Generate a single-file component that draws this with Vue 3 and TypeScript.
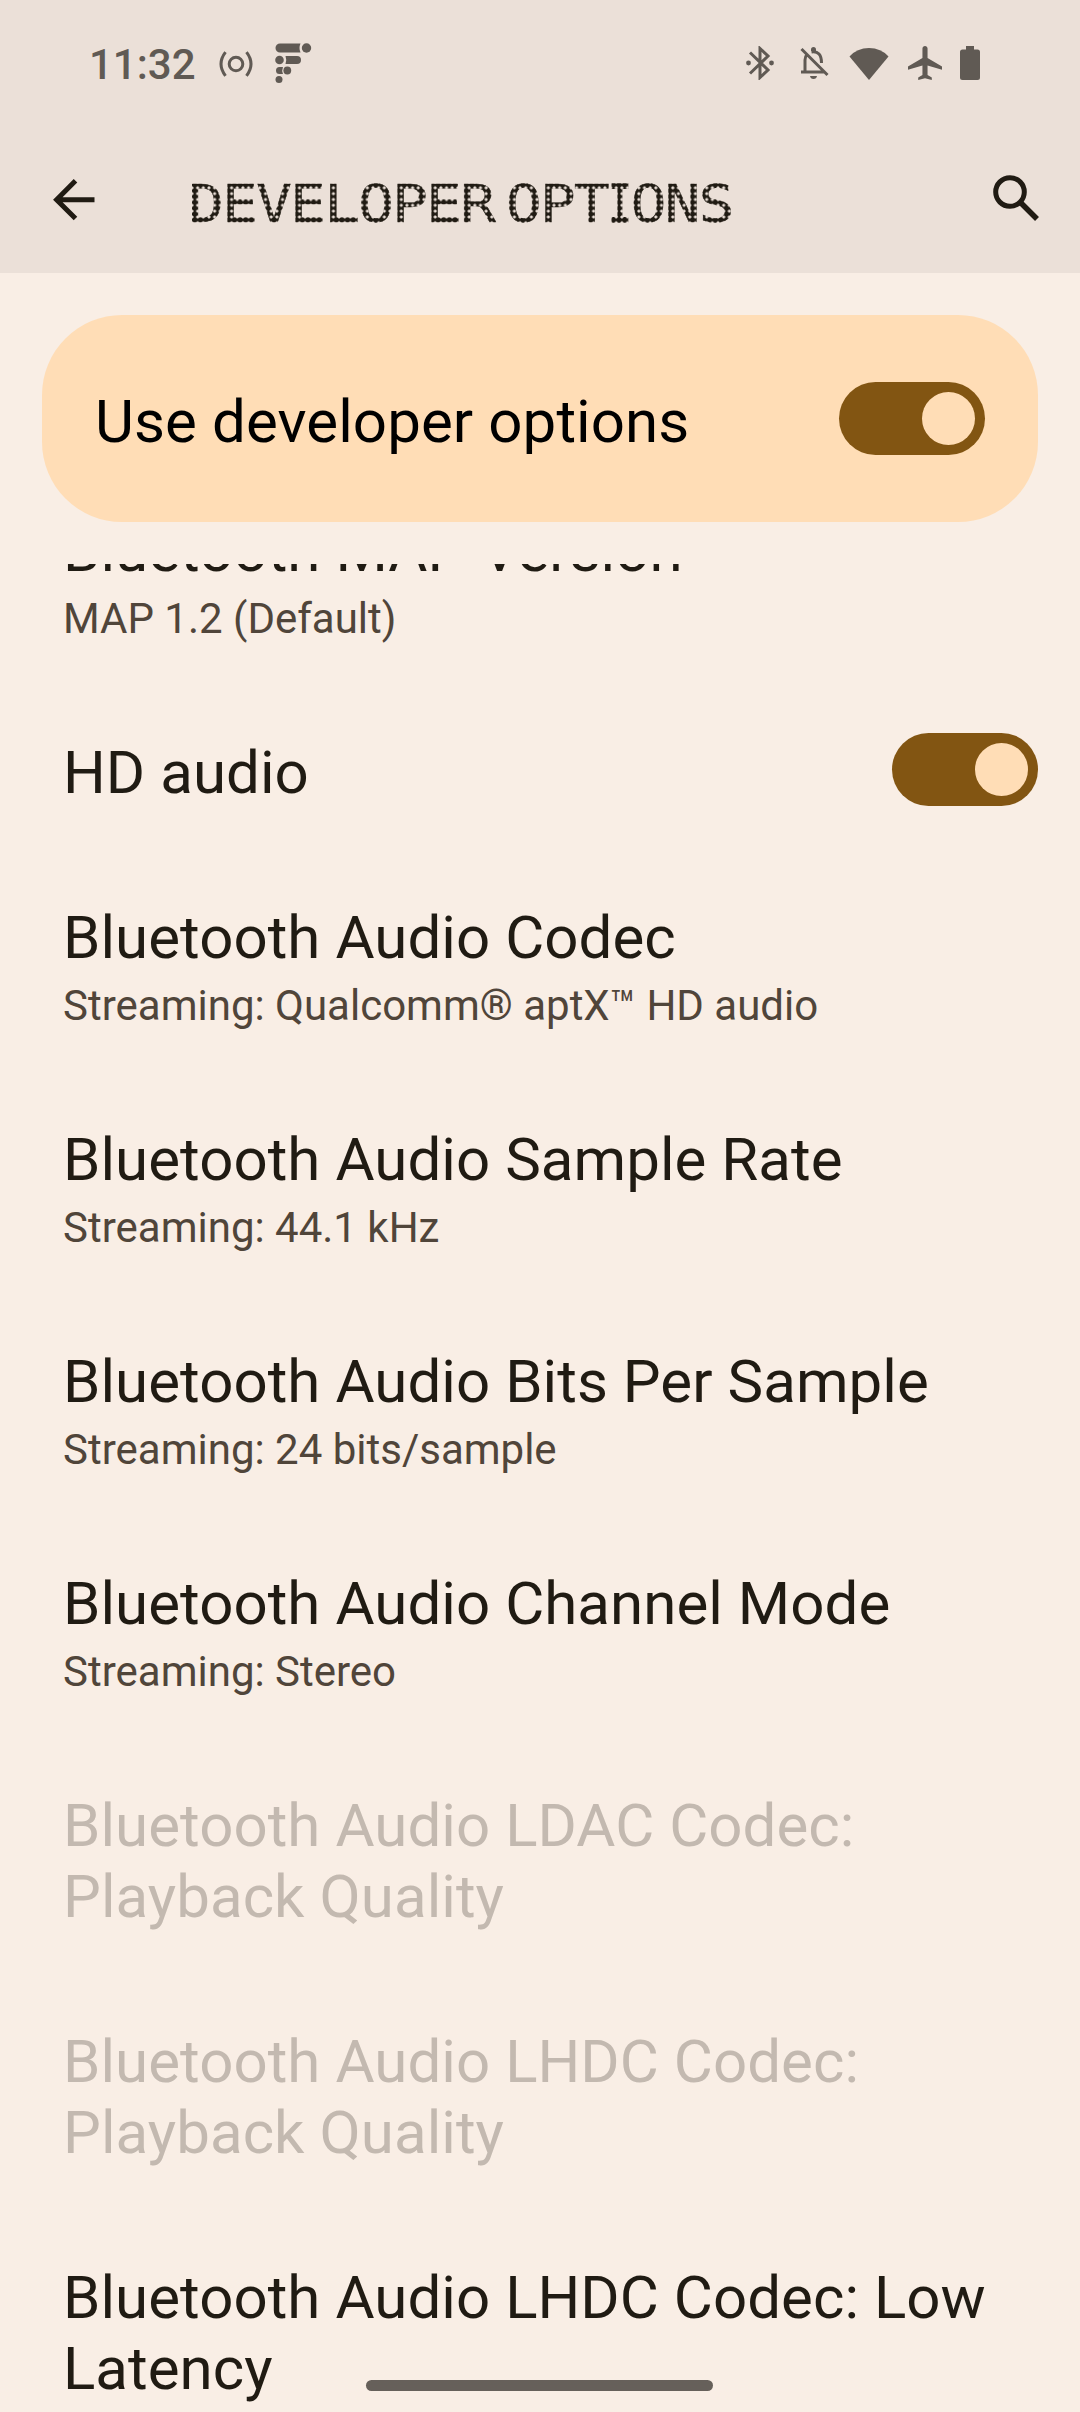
<script setup lang="ts">
interface Row { title: string; sub?: string; disabled?: boolean; toggle?: boolean; height: number }
const rows: Row[] = [
  { title: 'Bluetooth MAP Version', sub: 'MAP 1.2 (Default)', height: 222 },
  { title: 'HD audio', toggle: true, height: 165 },
  { title: 'Bluetooth Audio Codec', sub: 'Streaming: Qualcomm® aptX™ HD audio', height: 222 },
  { title: 'Bluetooth Audio Sample Rate', sub: 'Streaming: 44.1 kHz', height: 222 },
  { title: 'Bluetooth Audio Bits Per Sample', sub: 'Streaming: 24 bits/sample', height: 222 },
  { title: 'Bluetooth Audio Channel Mode', sub: 'Streaming: Stereo', height: 222 },
  { title: 'Bluetooth Audio LDAC Codec: Playback Quality', disabled: true, height: 236 },
  { title: 'Bluetooth Audio LHDC Codec: Playback Quality', disabled: true, height: 236 },
  { title: 'Bluetooth Audio LHDC Codec: Low Latency', height: 236 },
]
</script>

<template>
  <div class="screen">
    <header class="top">
      <div class="status">
        <span class="clock">11:32</span>
        <svg class="cast" width="34" height="28" viewBox="0 0 34 28" fill="none" stroke="#605a54" stroke-width="3">
          <circle cx="17" cy="14" r="6.8" />
          <path d="M6.5 2.2Q-2.5 14 6.5 25.8M27.5 2.2Q36.5 14 27.5 25.8" />
        </svg>
        <svg class="fbar" width="38" height="40" viewBox="0 0 38 40" fill="#605a54">
          <path d="M5 .5H25.5Q23.5 5 25.5 9.500H5A4.500 4.500 0 0 1 5 .5ZM10.500 13H22A4 4 0 0 1 22 21H10.500Q12 17 10.500 13ZM4.500 24H8Q6.500 27.500 8 31H4.500A3.500 3.500 0 0 1 4.500 24Z" />
          <circle cx="31.500" cy="5" r="4.700" /><circle cx="4.500" cy="17" r="4.300" />
          <circle cx="12.300" cy="27.500" r="3.900" /><circle cx="4" cy="36.500" r="3.500" />
        </svg>
        <div class="spacer"></div>
        <svg class="bt" width="28" height="34" viewBox="0 0 28 34" fill="none" stroke="#605a54" stroke-width="3">
          <path d="M4 6.500L22 24L14 31.500V2.500L22 10L4 27.500" />
          <circle cx="2.500" cy="17" r="2.400" fill="#605a54" stroke="none" /><circle cx="25.500" cy="17" r="2.400" fill="#605a54" stroke="none" />
        </svg>
        <svg class="bell" width="30" height="34" viewBox="0 0 30 34" fill="none" stroke="#605a54" stroke-width="3">
          <path d="M1.500 3L27.500 29M1 26H25M5 26V14Q5 10.500 7 8.500M11.500 6Q21.500 4.500 21.500 17" />
          <path d="M11 5V3.500A2.500 2.500 0 0 1 16 3.500V5ZM10 30H17Q16.500 33 13.500 33T10 30Z" fill="#605a54" stroke="none" />
        </svg>
        <svg class="wifi" width="40" height="33" viewBox="0 0 40 33"><path d="M.5 9.500Q8 1 20 1T39.500 9.500L20 33Z" fill="#605a54" /></svg>
        <svg class="plane" width="34" height="34" viewBox="2 2 20 20"><path fill="#605a54" d="M22 16v-2l-8.500-5V3.500c0-.83-.67-1.500-1.500-1.500s-1.500.67-1.500 1.500V9L2 14v2l8.500-2.500V19L8 20.500V22l4-1 4 1v-1.500L13.500 19v-5.500L22 16z" /></svg>
        <svg class="battery" width="20" height="34" viewBox="0 0 20 34"><path fill="#605a54" d="M6 0H14V3.500H17.500Q20 3.500 20 6V31.500Q20 34 17.500 34H2.500Q0 34 0 31.500V6Q0 3.500 2.500 3.500H6Z" /></svg>
      </div>
      <div class="bar">
        <svg class="back" width="42" height="42" viewBox="0 0 42 42" fill="none" stroke="#201b13" stroke-width="5"><path d="M41.500 20.700H4M22.500 1.800L3.600 20.700L22.500 39.600" /></svg>
        <h1 class="heading"><span class="wide">DEVELOPER OPT<span class="narrow">I</span>ONS</span></h1>
        <svg class="search" width="46" height="46" viewBox="0 0 46 46" fill="none" stroke="#201b13" stroke-width="5"><circle cx="17" cy="17" r="14.300" /><path d="M27 27L44 44" stroke-width="5.500" /></svg>
      </div>
    </header>
    <section class="master">
      <span class="title">Use developer options</span>
      <div class="switch"><i></i></div>
    </section>
    <main class="list">
      <div v-for="r in rows" :key="r.title" class="row" :class="{ disabled: r.disabled }" :style="{ height: r.height + 'px' }">
        <div class="copy">
          <div class="title">{{ r.title }}</div>
          <div v-if="r.sub" class="sub">{{ r.sub }}</div>
        </div>
        <div v-if="r.toggle" class="switch"><i></i></div>
      </div>
    </main>
    <div class="handle"></div>
  </div>
</template>

<style>
body { margin: 0; overflow: hidden; }
</style>
<style scoped>
.screen { position: relative; width: 1080px; height: 2412px; overflow: hidden; display: flex; flex-direction: column; background: #f9eee5; font-family: Roboto, sans-serif; color: #201b13; }
.top { height: 273px; flex: none; background: #ebe0d8; }
.status { height: 126px; box-sizing: border-box; display: flex; align-items: center; padding: 0 100px 0 89px; }
.status svg { flex: none; }
.clock { font-size: 42px; font-weight: 500; line-height: 50px; color: #605a54; width: 130px; padding-top: 3px; white-space: nowrap; }
.cast { margin-top: 2px; }
.fbar { margin-left: 22px; }
.spacer { flex: 1; }
.bell { margin-left: 26px; }
.wifi { margin-left: 19px; }
.plane { margin-left: 19px; }
.battery { margin-left: 18px; }
.bar { height: 147px; display: flex; align-items: flex-start; padding: 0 41px 0 53px; }
.back { margin-top: 53px; flex: none; }
.heading { margin: 56px 0 0 97px; padding-top: 1px; height: 42px; flex: 1; font: 400 52px/42px "DejaVu Sans Mono", monospace; white-space: nowrap; -webkit-mask-image: radial-gradient(circle, #000 2.500px, transparent 3.100px); -webkit-mask-size: 5.670px 5.830px; }
.wide { display: inline-block; margin-left: -4.500px; transform: scaleX(1.15); transform-origin: 0 0; letter-spacing: -1.730px; word-spacing: -19.500px; -webkit-text-stroke: .4px #201b13; }
.narrow { display: inline-block; width: 29.570px; margin: 0 -4.930px; transform: scaleX(.65); transform-origin: 15.650px 0; -webkit-text-stroke: 1.500px #201b13; }
.search { margin-top: 49px; flex: none; }
.master { flex: none; box-sizing: border-box; width: 996px; height: 207px; margin: 42px 42px 42px; padding: 0 53px; border-radius: 80px; background: #ffddb6; display: flex; align-items: center; justify-content: space-between; color: #000; }
.master .title { padding-top: 5px; letter-spacing: .1px; }
.title { font-size: 60px; line-height: 71px; letter-spacing: .05px; }
.switch { flex: none; box-sizing: border-box; width: 146px; height: 73px; border-radius: 37px; background: #825512; padding: 10px; display: flex; justify-content: flex-end; }
.switch i { width: 53px; height: 53px; border-radius: 50%; background: #ffddb6; }
.list { flex: 1; min-height: 0; overflow: hidden; display: flex; flex-direction: column; }
.row { flex: none; box-sizing: border-box; padding: 48px 42px 0 63px; display: flex; justify-content: space-between; align-items: flex-start; }
.row:first-child { margin-top: -97px; }
.row > .switch { margin-top: -4px; }
.sub { font-size: 42px; line-height: 49px; margin-top: 8px; color: #50453a; }
.disabled { color: #c3b9b0; }
.handle { position: absolute; left: 366px; top: 2380px; width: 347px; height: 11px; border-radius: 6px; background: #66605a; }
</style>
